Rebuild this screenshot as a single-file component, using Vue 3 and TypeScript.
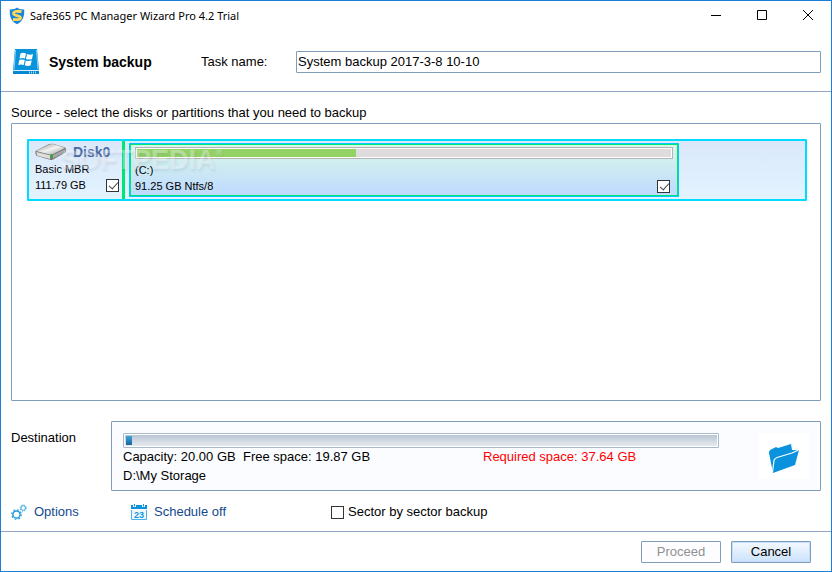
<script setup lang="ts">
import { ref } from 'vue'

interface Partition {
  label: string
  detail: string
  share: number
  used: number
}

const taskName = ref('System backup 2017-3-8 10-10')
const diskChecked = ref(true)
const partitionChecked = ref(true)
const sectorBySector = ref(false)
const partition: Partition = { label: '(C:)', detail: '91.25 GB Ntfs/8', share: 81.9, used: 41 }
const storageUsed = 1
</script>

<template>
  <main class="window">
    <header class="titlebar">
      <svg class="shield" viewBox="0 0 16 18" aria-hidden="true">
        <path d="M8 0.5C10 2 12.500 2.500 15.200 2.400C15.500 9 14.500 13.500 8 17.300C1.500 13.500 0.500 9 0.800 2.400C3.500 2.500 6 2 8 0.500Z" fill="#1686dc" />
        <path d="M12.500 4.500Q4.500 3.500 4.500 6.500C4.500 9 11.500 8.200 11.500 11Q11.500 13.200 4 12.500" fill="none" stroke="#ffd75a" stroke-width="2.800" />
      </svg>
      <h1>Safe365 PC Manager Wizard Pro 4.2 Trial</h1>
      <nav class="controls" aria-label="Window">
        <button type="button" aria-label="Minimize"><svg viewBox="0 0 12 12"><path d="M1 5.500H11" /></svg></button>
        <button type="button" aria-label="Maximize"><svg viewBox="0 0 12 12"><path d="M1.500 0.500H10.500V9.500H1.500Z" /></svg></button>
        <button type="button" aria-label="Close"><svg viewBox="0 0 12 12"><path d="M1 0L11 10M11 0L1 10" /></svg></button>
      </nav>
    </header>

    <section class="task">
      <svg class="task-icon" viewBox="0 0 28 28" aria-hidden="true">
        <path d="M3 1H25L27 22H1Z" fill="#0a93dd" />
        <path d="M3.500 2L2 21.500M24.500 2L26 21.500" stroke="#8bd0f3" />
        <path d="M1 22H27V26H1Z" fill="#0787cf" />
        <path d="M1 22.500H27" stroke="#d9f1fc" />
        <path d="M17 24.500H25" stroke="#a6dcf7" stroke-dasharray="1 1" stroke-width="2" />
        <path d="M8.500 5.500Q11 4 14 5.500L13 10.500Q10 9.500 7.500 10.700ZM15 6Q18 7.300 21 6L20 11Q17 12.200 14 11ZM7.300 12Q10 10.800 12.800 12L11.800 17Q9 15.800 6.300 17ZM13.800 12.400Q17 13.500 19.700 12.300L18.700 17.300Q16 18.700 12.800 17.300Z" fill="#fff" />
      </svg>
      <h2>System backup</h2>
      <label for="task-name">Task name:</label>
      <input id="task-name" v-model="taskName" type="text" />
    </section>

    <section class="source">
      <h3>Source - select the disks or partitions that you need to backup</h3>
      <div class="disk-list">
        <article class="disk">
          <div class="disk-info">
            <div class="disk-head">
              <svg class="drive" viewBox="0 0 32 18" aria-hidden="true">
                <defs>
                  <linearGradient id="drive-top" x1="0" y1="0" x2="1" y2="1">
                    <stop offset="0" stop-color="#8d8d8d" /><stop offset="0.500" stop-color="#f2f2f2" /><stop offset="1" stop-color="#9a9a9a" />
                  </linearGradient>
                </defs>
                <path d="M0.500 8L14 1Q17 0.300 19 1L30 4.500Q31.500 5 31 9L19 16Q17 17.500 14 16.500L2 13Q0 12 0.500 8Z" fill="#777" />
                <path d="M1 8L14 1.500Q17 0.700 19 1.300L30 5L18 11Q16 12 13 11Z" fill="url(#drive-top)" />
                <path d="M1.500 9L15 12.300V16L3 13Q1.500 12.500 1.500 9Z" fill="#ddd" />
                <path d="M18 12L30.500 6V8.500L18 15.500Z" fill="#a7a7a7" />
                <path d="M16.500 11V14.500" stroke="#29b629" stroke-width="2" />
              </svg>
              <strong>Disk0</strong>
            </div>
            <span>Basic MBR</span>
            <div class="line">
              <span>111.79 GB</span>
              <input v-model="diskChecked" type="checkbox" aria-label="Disk0" />
            </div>
          </div>
          <div class="partitions">
            <div class="partition" :style="{ width: partition.share + '%' }">
              <div class="usage"><div class="used" :style="{ width: partition.used + '%' }"></div></div>
              <span>{{ partition.label }}</span>
              <div class="line">
                <span>{{ partition.detail }}</span>
                <input v-model="partitionChecked" type="checkbox" aria-label="(C:)" />
              </div>
            </div>
          </div>
          <span class="watermark">SOFTPEDIA<sup>®</sup></span>
        </article>
      </div>
    </section>

    <section class="destination">
      <h3>Destination</h3>
      <div class="target">
        <div class="target-info">
          <div class="capacity"><div class="filled" :style="{ width: storageUsed + '%' }"></div></div>
          <div class="figures">
            <span>Capacity: 20.00 GB&nbsp; Free space: 19.87 GB</span>
            <span class="required">Required space: 37.64 GB</span>
          </div>
          <span>D:\My Storage</span>
        </div>
        <button class="browse" type="button" aria-label="Browse">
          <svg viewBox="0 0 32 32" aria-hidden="true">
            <path d="M1 10L2 8L8 5L10 6L23 2L24 8L31 8L27 23L5 31L1 11Z" fill="#0a92df" />
            <path d="M4.500 30L6 18.500Q6.500 16.500 9 15.500L24 11L30.500 8" fill="none" stroke="#fff" stroke-width="1.200" />
          </svg>
        </button>
      </div>
    </section>

    <section class="options">
      <a href="#options">
        <svg viewBox="0 0 16 16" aria-hidden="true">
          <circle cx="5.500" cy="10.500" r="3.600" fill="none" stroke="#239bdd" stroke-width="1.500" />
          <circle cx="5.500" cy="10.500" r="4.800" fill="none" stroke="#239bdd" stroke-width="1.200" stroke-dasharray="1.700 2.070" />
          <circle cx="12.200" cy="4" r="2.300" fill="none" stroke="#39a8e3" />
          <circle cx="12.200" cy="4" r="3.100" fill="none" stroke="#39a8e3" stroke-dasharray="1.200 1.230" />
        </svg>
        Options
      </a>
      <a href="#schedule">
        <svg viewBox="0 0 16 16" aria-hidden="true">
          <path d="M0 1H16V5H0Z" fill="#0a92df" />
          <path d="M3.500 0V3M12.500 0V3" stroke="#fff" stroke-width="3" />
          <path d="M3.500 0V2.500M12.500 0V2.500" stroke="#0a92df" />
          <path d="M0.500 6V15.500H15.500V6" fill="#eef9ff" stroke="#4ab4e9" />
          <text x="8" y="14" text-anchor="middle">23</text>
        </svg>
        Schedule off
      </a>
      <label><input v-model="sectorBySector" type="checkbox" />Sector by sector backup</label>
    </section>

    <footer>
      <button type="button" disabled>Proceed</button>
      <button type="button" class="primary">Cancel</button>
    </footer>
  </main>
</template>

<style>
body { margin: 0; }
</style>

<style scoped>
* { box-sizing: border-box; }
.window {
  display: flex;
  flex-direction: column;
  min-height: 100vh;
  border: 1px solid #1a7fd4;
  background: #fff;
  color: #000;
  font: 13px/20px "Liberation Sans", Arial, sans-serif;
}
h1, h2, h3 { margin: 0; font-size: 13px; font-weight: 400; }
button, input { font: inherit; color: inherit; }
.titlebar { display: flex; align-items: center; height: 29px; padding-left: 8px; }
.shield { width: 16px; height: 18px; margin-right: 5px; }
h1 { flex: 1; font: 11px/20px "Noto Sans", sans-serif; }
.controls { display: flex; }
.controls button { display: flex; justify-content: center; align-items: center; width: 46px; height: 29px; padding: 0; border: 0; background: none; }
.controls svg { width: 12px; height: 12px; fill: none; stroke: #000; }
.task { display: flex; align-items: center; height: 62px; padding: 2px 10px 0 11px; border-bottom: 1px solid #91a9c5; }
.task-icon { width: 28px; height: 28px; flex: none; }
h2 { flex: none; width: 161px; padding-left: 9px; font-size: 14px; font-weight: 700; }
.task label { flex: none; width: 95px; }
.task input { flex: 1; min-width: 0; height: 22px; padding: 0 1px; border: 1px solid #7f9db9; border-radius: 1px; background: #fff; }
.source { flex: 1; display: flex; flex-direction: column; padding: 11px 10px 0; }
.disk-list { flex: 1; padding: 15px 13px 15px 15px; border: 1px solid #7f9db9; border-radius: 1px; }
.disk {
  position: relative;
  display: flex;
  border: 2px solid #00dcff;
  border-radius: 1px;
  background: linear-gradient(#dae8fa, #e3f3ff);
  font-size: 11px;
  line-height: 16px;
}
.disk-info { width: 96px; height: 58px; padding: 2px 3px 0 6px; border-right: 3px solid #00e676; }
.disk-head { display: flex; align-items: center; gap: 6px; height: 18px; color: #4d6ba3; font-size: 14px; }
.drive { width: 32px; height: 18px; flex: none; }
.line { display: flex; justify-content: space-between; align-items: center; height: 16px; }
.disk span { display: block; }
.partitions { flex: 1; padding: 2px 4px; }
.partition {
  height: 54px;
  padding: 2px 4px;
  border: 2px solid #00e676;
  outline: 1px solid #00c8ff;
  outline-offset: -1px;
  border-radius: 1px;
  background: linear-gradient(#d9f8e9, #bfdaff);
}
.usage { height: 12px; margin-bottom: 3px; padding: 1px; border: 1px solid #b4b4b4; background: #dedcdc; box-shadow: inset 0 0 0 1px #fff; }
.used { height: 100%; border: solid #fff; border-width: 1px 0 1px 1px; background: #93d265; }
input[type="checkbox"] {
  appearance: none;
  width: 13px;
  height: 13px;
  margin: 0;
  flex: none;
  border: 1px solid #333;
  background: #fff;
}
.usage { padding: 0; }
input[type="checkbox"]:checked::after {
  content: "";
  display: block;
  width: 4px;
  height: 8px;
  margin: 0 0 0 4px;
  border: solid #444;
  border-width: 0 1px 1px 0;
  transform: rotate(42deg);
}
.partition .line { padding-right: 3px; }
.disk .watermark {
  position: absolute;
  top: 5px;
  left: 32px;
  color: rgba(255, 255, 255, 0.35);
  font: 700 27px/29px "Liberation Sans", sans-serif;
  text-shadow: 1px 2px 3px rgba(60, 80, 110, 0.12);
  pointer-events: none;
}
.watermark sup { font-size: 9px; line-height: 9px; vertical-align: 13px; }
.destination { display: flex; padding: 20px 10px 0; }
.destination h3 { flex: none; width: 100px; padding-top: 7px; }
.target { flex: 1; display: flex; align-items: flex-start; height: 70px; padding: 11px 11px 0; border: 1px solid #7f9db9; border-radius: 1px; background: #fbfcff; }
.target-info { flex: 1; min-width: 0; }
.capacity { height: 15px; padding: 2px; border: 1px solid #a9b9c9; border-radius: 1px; background: linear-gradient(#b4c2d1, #ebeef1); box-shadow: inset 0 0 0 1px #fff; }
.filled { height: 100%; min-width: 5px; background: linear-gradient(#3fa4d9, #16659f); }
.figures { display: flex; line-height: 18px; }
.figures span { width: 360px; }
.figures .required { width: auto; color: #f00; }
.browse { display: flex; align-items: center; justify-content: center; flex: none; width: 50px; height: 46px; margin-left: 40px; padding: 4px 0 0; border: 0; background: #fff; }
.browse svg { width: 32px; height: 32px; }
.options { display: flex; align-items: center; height: 40px; padding: 2px 10px 0; }
.options a { display: flex; align-items: center; gap: 7px; width: 120px; color: #134a8e; text-decoration: none; }
.options a + a { width: 200px; }
.options svg { width: 16px; height: 16px; }
.options text { fill: #1595dc; font: 700 9px "Liberation Sans", sans-serif; }
.options label { display: flex; align-items: center; gap: 4px; }
footer { display: flex; justify-content: flex-end; gap: 10px; padding: 9px 20px 8px; border-top: 1px solid #91a9c5; }
footer button { width: 80px; height: 22px; padding: 0; border: 1px solid #7f9db9; border-radius: 1px; background: #fdfdff; }
footer button:disabled { color: #909090; }
footer .primary { background: linear-gradient(#f5faff, #cbe2fc); box-shadow: inset 0 0 0 1px #c4ddfb; }
</style>
